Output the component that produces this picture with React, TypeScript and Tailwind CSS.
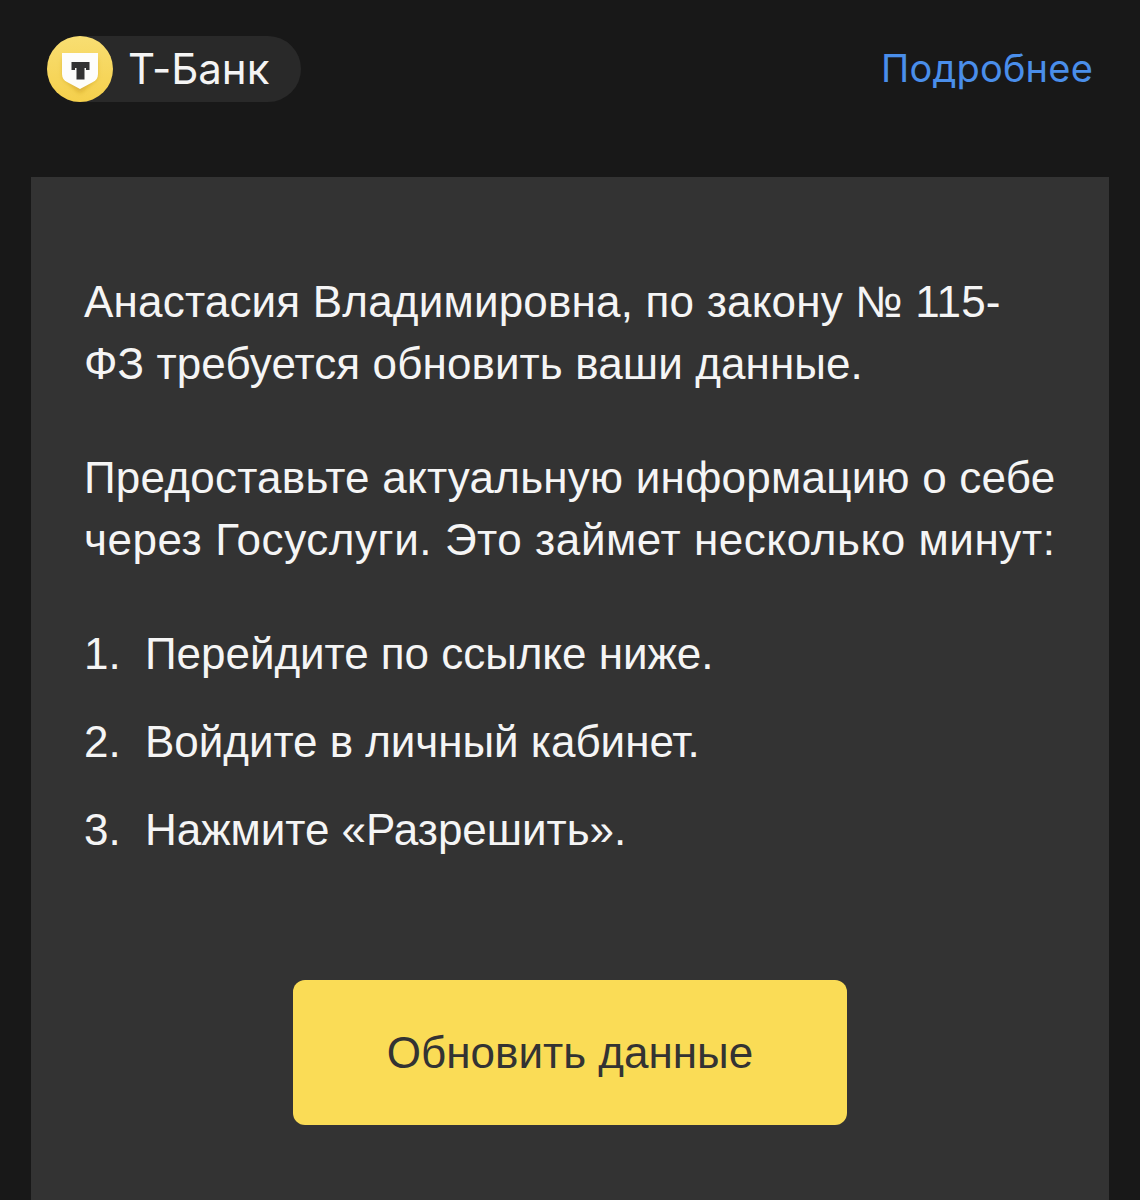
export default function App() {
  return (
    <div className="h-[1200px] w-[1140px] overflow-hidden bg-[#181818] font-['Liberation_Sans',sans-serif]">
      <header className="flex h-[177px] items-start justify-between pl-[47px] pr-[47px] pt-[36px]">
        <div className="flex h-[66px] w-[254px] items-center rounded-full bg-[#292929]">
          <svg width="66" height="66" viewBox="0 0 66 66" className="shrink-0">
            <defs>
              <linearGradient id="coin" x1="0" y1="0" x2="0" y2="1">
                <stop offset="0" stopColor="#f8de72" />
                <stop offset="1" stopColor="#f5d04c" />
              </linearGradient>
              <filter id="soft" x="-30%" y="-30%" width="160%" height="160%">
                <feGaussianBlur stdDeviation="2.5" />
              </filter>
            </defs>
            <circle cx="33" cy="33" r="33" fill="url(#coin)" />
            <path d="M16 22H50V42L33 57L16 42Z" fill="#b98a16" fillOpacity="0.5" filter="url(#soft)" />
            <path d="M15 17H51V38C51 42 49 44.5 46 46L33 53L20 46C17 44.5 15 42 15 38Z" fill="#fdfdfb" />
            <path d="M24.5 26H42.5V34H39V32H37.5V43.5H29.5V32H28V34H24.5Z" fill="#333333" />
          </svg>
          <span className="ml-[15px] font-['Inter',sans-serif] text-[42px] leading-none tracking-[-0.05px] text-[#f4f4f4]">Т-Банк</span>
        </div>
        <a className="mt-[8px] font-['Inter',sans-serif] text-[38px] leading-[48px] tracking-[0.2px] text-[#4a8eea]">Подробнее</a>
      </header>
      <main className="mx-[31px] h-[1023px] bg-[#333333] pl-[53px] pr-[40px] pt-[94px] text-[44px] leading-[62px] text-[#f5f5f5]">
        <p>
          <span className="tracking-[0.19px]">Анастасия Владимировна, по закону № 115-</span>
          <br />
          <span className="tracking-[0.1px]">ФЗ требуется обновить ваши данные.</span>
        </p>
        <p className="mt-[52px]">
          <span className="tracking-[0.24px]">Предоставьте актуальную информацию о себе</span>
          <br />
          <span className="tracking-[0.56px]">через Госуслуги. Это займет несколько минут:</span>
        </p>
        <ol className="mt-[52px] flex flex-col gap-[26px]">
          <li className="flex"><span className="w-[61px] shrink-0">1.</span><span className="tracking-[-0.04px]">Перейдите по ссылке ниже.</span></li>
          <li className="flex"><span className="w-[61px] shrink-0">2.</span><span className="tracking-[-0.04px]">Войдите в личный кабинет.</span></li>
          <li className="flex"><span className="w-[61px] shrink-0">3.</span><span className="tracking-[-0.04px]">Нажмите «Разрешить».</span></li>
        </ol>
        <div className="ml-[209px] mt-[119px]">
          <button className="flex h-[145px] w-[554px] items-center justify-center rounded-[12px] bg-[#fadc56] text-[#333333]">Обновить данные</button>
        </div>
      </main>
    </div>
  );
}
